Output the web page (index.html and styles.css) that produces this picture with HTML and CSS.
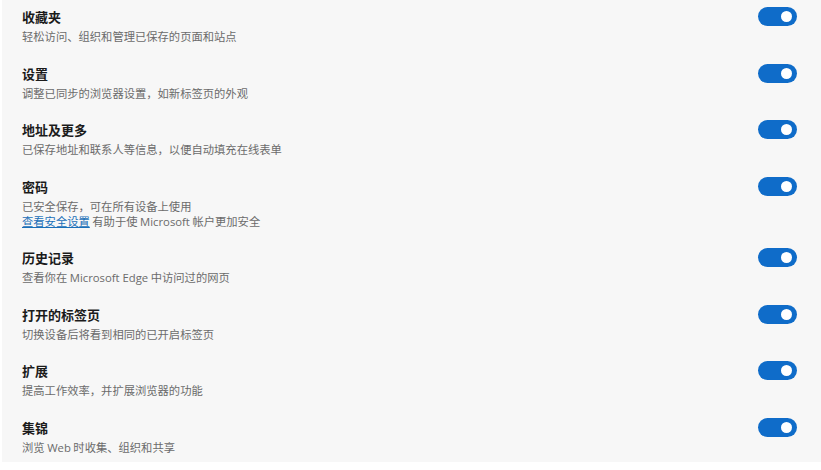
FILE: index.html
```html
<!DOCTYPE html>
<html lang="zh-CN">
<head>
<meta charset="utf-8">
<title>同步</title>
<link rel="stylesheet" href="styles.css">
</head>
<body>
<div class="panel">
  <div class="row">
    <div class="text">
      <div class="title">收藏夹</div>
      <div class="desc">轻松访问、组织和管理已保存的页面和站点</div>
    </div>
    <span class="toggle"><span class="knob"></span></span>
  </div>
  <div class="row">
    <div class="text">
      <div class="title">设置</div>
      <div class="desc">调整已同步的浏览器设置，如新标签页的外观</div>
    </div>
    <span class="toggle"><span class="knob"></span></span>
  </div>
  <div class="row">
    <div class="text">
      <div class="title">地址及更多</div>
      <div class="desc">已保存地址和联系人等信息，以便自动填充在线表单</div>
    </div>
    <span class="toggle"><span class="knob"></span></span>
  </div>
  <div class="row">
    <div class="text">
      <div class="title">密码</div>
      <div class="desc">已安全保存，可在所有设备上使用</div>
      <div class="desc"><a class="link" href="#">查看安全设置</a> 有助于使 <span class="latin">Microsoft</span> 帐户更加安全</div>
    </div>
    <span class="toggle"><span class="knob"></span></span>
  </div>
  <div class="row">
    <div class="text">
      <div class="title">历史记录</div>
      <div class="desc">查看你在 <span class="latin">Microsoft Edge</span> 中访问过的网页</div>
    </div>
    <span class="toggle"><span class="knob"></span></span>
  </div>
  <div class="row">
    <div class="text">
      <div class="title">打开的标签页</div>
      <div class="desc">切换设备后将看到相同的已开启标签页</div>
    </div>
    <span class="toggle"><span class="knob"></span></span>
  </div>
  <div class="row">
    <div class="text">
      <div class="title">扩展</div>
      <div class="desc">提高工作效率，并扩展浏览器的功能</div>
    </div>
    <span class="toggle"><span class="knob"></span></span>
  </div>
  <div class="row">
    <div class="text">
      <div class="title">集锦</div>
      <div class="desc">浏览 <span class="latin">Web</span> 时收集、组织和共享</div>
    </div>
    <span class="toggle"><span class="knob"></span></span>
  </div>
</div>
</body>
</html>
```
FILE: styles.css
```css
html, body {
  margin: 0;
  padding: 0;
  background: #ffffff;
}
body {
  width: 821px;
  height: 470px;
  overflow: hidden;
  font-family: "Noto Sans CJK SC", "Noto Sans", sans-serif;
}
.panel {
  margin-left: 2px;
  height: 462px;
  background: #f7f7f7;
  padding: 0 24px 0 20px;
  box-sizing: border-box;
}
.row {
  display: flex;
  justify-content: space-between;
  align-items: flex-start;
  padding: 7px 0 12.5px;
}
.title {
  font-size: 13px;
  font-weight: 700;
  line-height: 20px;
  color: #1b1b1b;
  margin-bottom: 2px;
}
.desc {
  font-size: 11.3px;
  line-height: 15px;
  color: #6b6b6b;
}
.latin {
  font-family: "Open Sans", "Noto Sans", sans-serif;
}
.link {
  color: #1a6fb8;
  text-decoration: underline;
}
.toggle {
  position: relative;
  display: block;
  width: 39px;
  height: 19px;
  border-radius: 10px;
  background: #0f6cc9;
  flex-shrink: 0;
}
.knob {
  position: absolute;
  right: 5px;
  top: 4px;
  width: 11px;
  height: 11px;
  border-radius: 50%;
  background: #ffffff;
}
```
